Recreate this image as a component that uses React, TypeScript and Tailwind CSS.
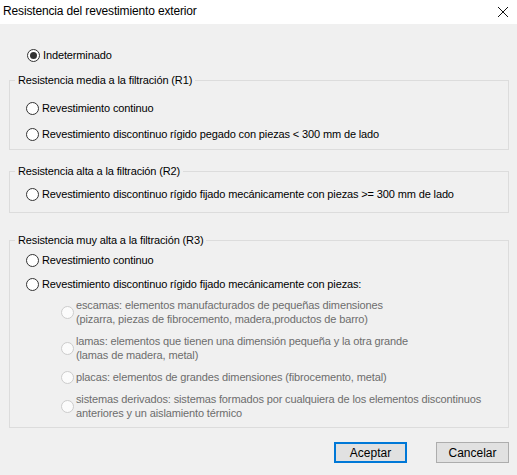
import React from "react";

function Radio({ checked = false, disabled = false }: { checked?: boolean; disabled?: boolean }) {
  return (
    <span
      className={`flex h-[13px] w-[13px] shrink-0 items-center justify-center rounded-full border ${
        disabled ? "border-[#cccccc] bg-[#fbfbfb]" : "border-[#333333] bg-white"
      }`}
    >
      {checked && <span className="h-[7px] w-[7px] rounded-full bg-[#333333]" />}
    </span>
  );
}

function Option({ label, checked = false }: { label: string; checked?: boolean }) {
  return (
    <div className="flex h-[26px] items-center gap-[3px] pl-[16px]">
      <Radio checked={checked} />
      <span>{label}</span>
    </div>
  );
}

function SubOption({ lines }: { lines: string[] }) {
  return (
    <div className="flex items-center gap-[2px] pl-[51px] text-[#6d6d6d]">
      <Radio disabled />
      <div className="leading-[14px]">
        {lines.map((l) => (
          <div key={l}>{l}</div>
        ))}
      </div>
    </div>
  );
}

function Group({ title, children, className = "" }: { title: string; children: React.ReactNode; className?: string }) {
  return (
    <fieldset className={`border border-[#dcdcdc] ${className}`}>
      <legend className="ml-[5px] px-[3px] leading-[15px]">{title}</legend>
      {children}
    </fieldset>
  );
}

export default function App() {
  return (
    <div
      className="flex h-[475px] w-[517px] flex-col bg-[#f0f0f0] text-[11px] tracking-[-0.13px] text-black"
      style={{ fontFamily: '"Liberation Sans", Arial, sans-serif' }}
    >
      <div className="flex h-[24px] shrink-0 items-center justify-between bg-white pb-[3px] pl-[3px] pr-[7px] text-[12px] tracking-[-0.15px]">
        <span>Resistencia del revestimiento exterior</span>
        <svg width="12" height="12" viewBox="0 0 12 12" className="mr-[1px] mt-[3px]">
          <path d="M1 1 L11 11 M11 1 L1 11" stroke="#111" strokeWidth="1" />
        </svg>
      </div>

      <div className="flex flex-1 flex-col px-[9px] pr-[8px]">
        <div className="mt-[23px] flex h-[16px] items-center gap-[3px] pl-[18px]">
          <Radio checked />
          <span>Indeterminado</span>
        </div>

        <Group title="Resistencia media a la filtración (R1)" className="mt-[10px] pb-[2px] pt-[7px]">
          <Option label="Revestimiento continuo" />
          <Option label="Revestimiento discontinuo rígido pegado con piezas < 300 mm de lado" />
        </Group>

        <Group title="Resistencia alta a la filtración (R2)" className="mt-[14px] pb-[5px] pt-[2px]">
          <Option label="Revestimiento discontinuo rígido fijado mecánicamente con piezas >= 300 mm de lado" />
        </Group>

        <Group title="Resistencia muy alta a la filtración (R3)" className="mt-[20px] pb-[7px]">
          <div className="-mt-[1px]">
            <Option label="Revestimiento continuo" />
          </div>
          <div className="-mt-[2px]">
            <Option label="Revestimiento discontinuo rígido fijado mecánicamente con piezas:" />
          </div>
          <div className="mt-[1px] flex flex-col gap-[8px]">
            <SubOption
              lines={[
                "escamas: elementos manufacturados de pequeñas dimensiones",
                "(pizarra, piezas de fibrocemento, madera,productos de barro)",
              ]}
            />
            <SubOption
              lines={[
                "lamas: elementos que tienen una dimensión pequeña y la otra grande",
                "(lamas de madera, metal)",
              ]}
            />
            <SubOption lines={["placas: elementos de grandes dimensiones (fibrocemento, metal)"]} />
            <SubOption
              lines={[
                "sistemas derivados: sistemas formados por cualquiera de los elementos discontinuos",
                "anteriores y un aislamiento térmico",
              ]}
            />
          </div>
        </Group>

        <div className="mt-[14px] flex justify-end gap-[29px] tracking-normal">
          <button className="h-[21px] w-[73px] border-2 border-[#0078d7] bg-[#e1e1e1] text-[12px]">Aceptar</button>
          <button className="h-[21px] w-[73px] border border-[#adadad] bg-[#e1e1e1] text-[12px]">Cancelar</button>
        </div>
      </div>
    </div>
  );
}
